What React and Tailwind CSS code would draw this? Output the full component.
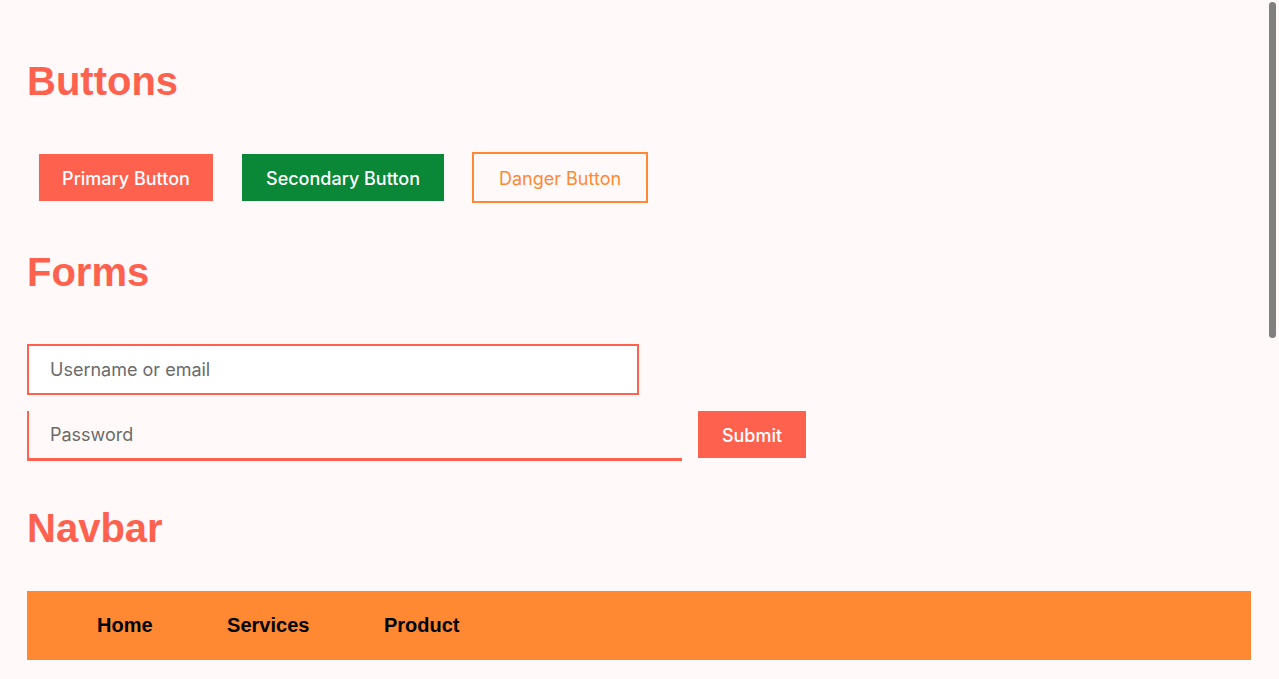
import React from 'react';

const headingClass =
  "text-[40px] leading-[40px] font-bold text-[#ff614f] font-['Liberation_Sans',Arial,sans-serif]";

const App = () => {
  return (
    <div className="relative h-[679px] overflow-hidden bg-[#fffaf9] pl-[27px] pr-[28px] pt-[61px] font-['Inter','Roboto',sans-serif]">
      <h1 className={headingClass}>Buttons</h1>

      <div className="mt-[51px] flex h-[51px] items-center pl-[12px] text-[18px]">
        <button className="h-[47px] w-[174px] bg-[#ff614f] pt-[2px] font-medium text-white">
          Primary Button
        </button>
        <button className="ml-[29px] h-[47px] w-[202px] bg-[#0a8837] pt-[2px] font-medium text-white">
          Secondary Button
        </button>
        <button className="ml-[28px] h-[51px] w-[176px] border-2 border-[#ff8833] pt-[2px] text-[#ff8833]">
          Danger Button
        </button>
      </div>

      <h1 className={`mt-[49px] ${headingClass}`}>Forms</h1>

      <form className="mt-[52px]" onSubmit={(e) => e.preventDefault()}>
        <input
          type="text"
          placeholder="Username or email"
          className="block h-[51px] w-[612px] border-2 border-[#ff614f] bg-white px-[21px] text-[18px] text-[#333] placeholder:text-[#6b6b6b] focus:outline-none"
        />
        <div className="mt-[16px] flex items-start">
          <input
            type="password"
            placeholder="Password"
            className="block h-[50px] w-[655px] border-b-[3px] border-l-2 border-[#ff614f] bg-transparent px-[21px] text-[18px] text-[#333] placeholder:text-[#6b6b6b] focus:outline-none"
          />
          <button
            type="submit"
            className="ml-[16px] h-[47px] w-[108px] bg-[#ff614f] pt-[2px] text-[18px] font-medium text-white"
          >
            Submit
          </button>
        </div>
      </form>

      <h1 className={`mt-[47px] ${headingClass}`}>Navbar</h1>

      <nav className="mt-[43px] flex h-[69px] items-center bg-[#ff8833] pb-[2px] pl-[70px]">
        <ul className="flex gap-[74.5px] text-[20px] font-bold text-black font-['Liberation_Sans',Arial,sans-serif]">
          <li><a href="#">Home</a></li>
          <li><a href="#">Services</a></li>
          <li><a href="#">Product</a></li>
        </ul>
      </nav>

      {/* overlay scrollbar thumb */}
      <div className="absolute right-[3px] top-[2px] h-[336px] w-[7px] rounded-full bg-[#808080]" />
    </div>
  );
};

export default App;
